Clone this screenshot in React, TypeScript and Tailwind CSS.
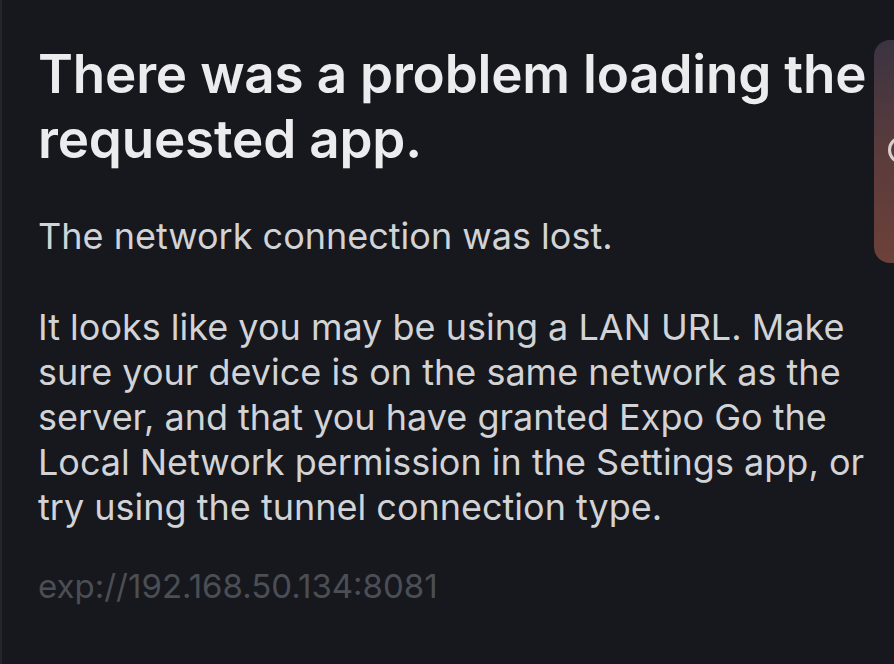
export default function App() {
  return (
    <div className="relative h-[664px] w-[894px] overflow-hidden bg-[#16181d] font-['Inter',sans-serif]">
      {/* thin lighter edge on the left */}
      <div className="absolute left-0 top-0 h-full w-[2px] bg-[#23262c]" />

      <div className="pl-[38px] pt-[42px]">
        <h1 className="whitespace-nowrap text-[53px] font-semibold leading-[65px] tracking-[-0.2px] text-[#ececee]">
          There was a problem loading the
          <br />
          requested app.
        </h1>

        <p className="mt-[42px] whitespace-nowrap text-[36px] leading-[45px] text-[#d2d3d6]">
          The network connection was lost.
        </p>

        <p className="mt-[46px] whitespace-nowrap text-[36px] leading-[45px] text-[#d2d3d6]">
          It looks like you may be using a LAN URL. Make
          <br />
          sure your device is on the same network as the
          <br />
          server, and that you have granted Expo Go the
          <br />
          Local Network permission in the Settings app, or
          <br />
          try using the tunnel connection type.
        </p>

        <p className="mt-[34px] whitespace-nowrap text-[33px] leading-[45px] text-[#4b4e55]">
          exp://192.168.50.134:8081
        </p>
      </div>

      {/* partially visible floating button at the right edge */}
      <div className="absolute left-[874px] top-[40px] h-[223px] w-[60px] rounded-[16px] bg-gradient-to-b from-[#3a3441] via-[#5a3b3c] to-[#6c4139]">
        <div className="absolute left-[14px] top-[96px] h-[28px] w-[28px] rounded-full border-[3px] border-[#d9cfcf]" />
      </div>
    </div>
  )
}
